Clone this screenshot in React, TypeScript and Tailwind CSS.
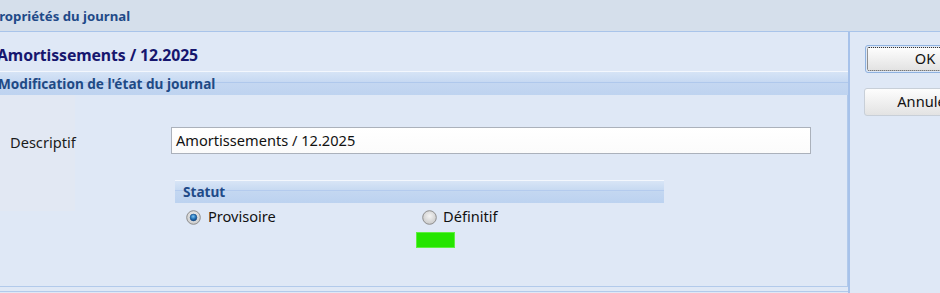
import React from "react";

function Radio({ checked }: { checked: boolean }) {
  return (
    <svg width="15" height="15" viewBox="0 0 15 15" className="shrink-0">
      <defs>
        <radialGradient id={checked ? "rgc" : "rgu"} cx="50%" cy="40%" r="60%">
          <stop offset="0%" stopColor="#f4f4f4" />
          <stop offset="100%" stopColor="#c9c9c9" />
        </radialGradient>
        <radialGradient id="dot" cx="45%" cy="35%" r="65%">
          <stop offset="0%" stopColor="#7fc4f0" />
          <stop offset="60%" stopColor="#1f6fb5" />
          <stop offset="100%" stopColor="#123f78" />
        </radialGradient>
      </defs>
      <circle cx="7.5" cy="7.5" r="6.8" fill={`url(#${checked ? "rgc" : "rgu"})`} stroke="#8e8e8e" strokeWidth="1" />
      {checked && <circle cx="7.5" cy="7.5" r="3.4" fill="url(#dot)" stroke="#1a4f8a" strokeWidth="0.6" />}
    </svg>
  );
}

export default function App() {
  const font = { fontFamily: '"Noto Sans", "Open Sans", sans-serif' };
  return (
    <div className="w-[940px] h-[293px] overflow-hidden bg-[#dfe8f6] flex flex-col" style={font}>
      {/* Title bar */}
      <div className="h-[32px] shrink-0 bg-[#d5dfeb] border-b border-[#a9c4ea] flex items-center">
        <span className="ml-[-9px] mt-[2px] text-[13.2px] font-bold text-[#1f4a88]">Propriétés du journal</span>
      </div>
      <div className="flex flex-1 min-h-0">
        {/* Left panel */}
        <div className="w-[850px] shrink-0 border-r-2 border-[#a7c2ea] flex flex-col">
          <div className="h-[39px] shrink-0 flex items-center pt-[9px]">
            <span className="ml-[-3px] text-[15.8px] font-bold text-[#16166e] tracking-[-0.1px]">Amortissements / 12.2025</span>
          </div>
          <div className="h-[24px] shrink-0 border-t border-[#f3f7fd] bg-gradient-to-b from-[#d6e4f6] via-[#c4d7f1] to-[#bed3f0] flex items-center relative">
            <div className="absolute left-0 right-0 top-[10px] h-px bg-[#afc8ec]" />
            <span className="relative ml-[-2px] mt-[1px] text-[13.6px] font-bold text-[#1f4a85]">Modification de l'état du journal</span>
          </div>
          <div className="h-[192px] shrink-0 border-r border-b border-[#b2caeb] flex">
            <div className="w-[75px] h-[116px] bg-[#e2e8f3] pt-[37px] pl-[10px] text-[14.6px] text-[#1b1b1b]">Descriptif</div>
            <div className="flex-1 pl-[96px] pt-[32px]">
              <div className="w-[640px] h-[27px] border border-[#abb1bb] bg-gradient-to-b from-white to-[#fbfbfb] flex items-center pl-[4px] text-[14.6px] text-[#111]">
                Amortissements / 12.2025
              </div>
              <div className="mt-[26px] ml-[4px] w-[489px] h-[23px] border-t border-[#f3f7fd] bg-gradient-to-b from-[#d8e5f6] via-[#c3d7f1] to-[#bcd2f0] flex items-center relative">
                <div className="absolute left-0 right-0 top-[9px] h-px bg-[#b4cbee]" />
                <span className="relative ml-[8px] mt-[1px] text-[13.6px] font-bold text-[#1f4a88]">Statut</span>
              </div>
              <div className="flex ml-[15px] mt-[6px] h-[16px] items-center">
                <div className="w-[236px] flex items-center gap-[7px]">
                  <Radio checked />
                  <span className="text-[14.6px] text-[#111]">Provisoire</span>
                </div>
                <div className="flex items-center gap-[6px]">
                  <Radio checked={false} />
                  <span className="text-[14.6px] text-[#111]">Définitif</span>
                </div>
              </div>
              <div className="ml-[245px] mt-[7px] w-[39px] h-[16px] bg-[#25e500] border border-[#5ef040]" />
            </div>
          </div>
          <div className="h-[5px] shrink-0 border-b border-[#b2caeb]" />
        </div>
        {/* Right panel */}
        <div className="flex-1 flex flex-col pl-[15px] pt-[13px]">
          <div className="w-[120px] h-[28px] rounded-[3px] border border-[#8fb2e0] p-[1px]">
            <div className="w-full h-full rounded-[2px] border border-dotted border-[#333] bg-gradient-to-b from-[#fdfdfd] via-[#f0f0f0] to-[#e3e3e3] flex items-center justify-center text-[14.6px] text-[#111]">
              OK
            </div>
          </div>
          <div className="mt-[15px] ml-[-1px] w-[121px] h-[28px] rounded-[3px] border border-[#c8cfd8] bg-gradient-to-b from-[#fdfdfd] via-[#f0f0f0] to-[#e3e3e3] flex items-center justify-center text-[14.6px] text-[#111]">
            Annuler
          </div>
        </div>
      </div>
    </div>
  );
}
